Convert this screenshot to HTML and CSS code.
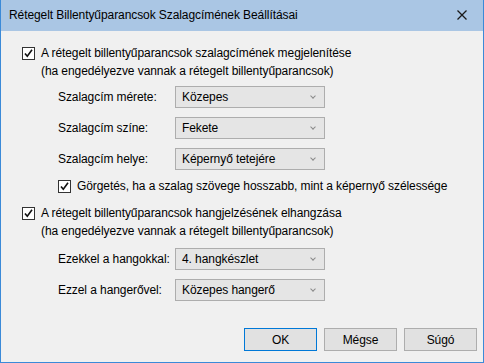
FILE: index.html
```html
<!DOCTYPE html>
<html lang="hu">
<head>
    <meta charset="UTF-8">
    <title>Rétegelt Billentyűparancsok Szalagcímének Beállításai</title>
    <link rel="stylesheet" href="styles.css">
</head>
<body>
<div class="window">
    <div class="titlebar">
        <span class="title">Rétegelt Billentyűparancsok Szalagcímének Beállításai</span>
        <svg class="close" width="10" height="10" viewBox="0 0 10 10">
            <path d="M0.5 0.5 L9.5 9.5 M9.5 0.5 L0.5 9.5" stroke="#1a1a1a" stroke-width="1.3"/>
        </svg>
    </div>
    <div class="content">
        <!-- első szakasz: szalagcím -->
        <div class="check-row">
            <span class="box"><svg width="11" height="11" viewBox="0 0 11 11"><path d="M2 5.5 L4.3 8.3 L9 1.8" fill="none" stroke="#111" stroke-width="1.6"/></svg></span>
            <div class="check-text">
                A rétegelt billentyűparancsok szalagcímének megjelenítése<br>
                (ha engedélyezve vannak a rétegelt billentyűparancsok)
            </div>
        </div>
        <div class="field first">
            <span class="label">Szalagcím mérete:</span>
            <div class="combo"><span>Közepes</span><span class="arrow"></span></div>
        </div>
        <div class="field">
            <span class="label">Szalagcím színe:</span>
            <div class="combo"><span>Fekete</span><span class="arrow"></span></div>
        </div>
        <div class="field">
            <span class="label">Szalagcím helye:</span>
            <div class="combo"><span>Képernyő tetejére</span><span class="arrow"></span></div>
        </div>
        <div class="check-row sub">
            <span class="box"><svg width="11" height="11" viewBox="0 0 11 11"><path d="M2 5.5 L4.3 8.3 L9 1.8" fill="none" stroke="#111" stroke-width="1.6"/></svg></span>
            <div class="check-text">Görgetés, ha a szalag szövege hosszabb, mint a képernyő szélessége</div>
        </div>

        <!-- második szakasz: hangjelzés -->
        <div class="check-row second">
            <span class="box"><svg width="11" height="11" viewBox="0 0 11 11"><path d="M2 5.5 L4.3 8.3 L9 1.8" fill="none" stroke="#111" stroke-width="1.6"/></svg></span>
            <div class="check-text">
                A rétegelt billentyűparancsok hangjelzésének elhangzása<br>
                (ha engedélyezve vannak a rétegelt billentyűparancsok)
            </div>
        </div>
        <div class="field sound">
            <span class="label">Ezekkel a hangokkal:</span>
            <div class="combo"><span>4. hangkészlet</span><span class="arrow"></span></div>
        </div>
        <div class="field">
            <span class="label">Ezzel a hangerővel:</span>
            <div class="combo"><span>Közepes hangerő</span><span class="arrow"></span></div>
        </div>

        <div class="buttons">
            <button class="btn default">OK</button>
            <button class="btn">Mégse</button>
            <button class="btn">Súgó</button>
        </div>
    </div>
</div>
</body>
</html>
```

FILE: styles.css
```css
body {
    margin: 0;
    padding: 0;
    font-family: 'Liberation Sans', Arial, sans-serif;
    font-size: 12px;
    letter-spacing: -0.08px;
    color: #000;
    background-color: #f0f0f0;
}

.window {
    width: 484px;
    height: 363px;
    box-sizing: border-box;
    border: 1px solid #3b8ad8;
    border-top: none;
    background-color: #f0f0f0;
    display: flex;
    flex-direction: column;
}

.titlebar {
    height: 30px;
    background-color: #aac6e4;
    display: flex;
    align-items: center;
    justify-content: space-between;
    padding: 0 16px 1px 8px;
    flex-shrink: 0;
}

.title {
    font-size: 12px;
    color: #000;
}

.content {
    padding: 13px 0 0 21px;
    display: flex;
    flex-direction: column;
    line-height: 18px;
}

.check-row {
    display: flex;
    align-items: flex-start;
}

.check-row.sub {
    margin: 7px 0 0 36px;
}

.check-row.second {
    margin-top: 9px;
}

.box {
    width: 11px;
    height: 11px;
    border: 1px solid #333;
    background-color: #fff;
    margin: 3px 6px 0 0;
    flex-shrink: 0;
    display: flex;
}

.field {
    display: flex;
    align-items: center;
    margin: 9px 0 0 36px;
}

.field.first {
    margin-top: 6px;
}

.field.sound {
    margin-top: 8px;
}

.label {
    width: 117px;
}

.combo {
    width: 142px;
    height: 20px;
    border: 1px solid #adadad;
    background-color: #e5e5e5;
    display: flex;
    align-items: center;
    justify-content: space-between;
    padding: 0 0 0 6px;
}

.arrow {
    width: 3px;
    height: 3px;
    border-right: 1px solid #8a8a8a;
    border-bottom: 1px solid #8a8a8a;
    transform: rotate(45deg);
    margin: 0 9px 3px 0;
}

.buttons {
    display: flex;
    justify-content: flex-end;
    gap: 7px;
    margin: 27px 6px 0 0;
}

.btn {
    width: 73px;
    height: 23px;
    border: 1px solid #adadad;
    background-color: #e1e1e1;
    font-family: inherit;
    font-size: 12px;
    letter-spacing: inherit;
    color: #000;
    padding: 0;
}

.btn.default {
    border-color: #0078d7;
}
```
